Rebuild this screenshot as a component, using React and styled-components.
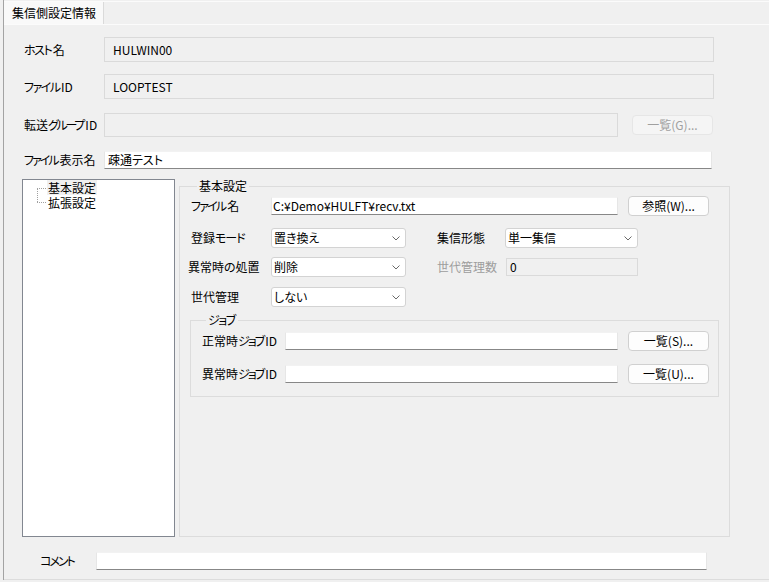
import React from 'react';
import styled, { createGlobalStyle } from 'styled-components';

const GlobalStyle = createGlobalStyle`
  html, body {
    margin: 0;
    padding: 0;
    background: #f0f0f0;
  }
  body {
    font-family: "Noto Sans CJK JP", "Noto Sans", sans-serif;
    font-size: 12px;
    font-feature-settings: "palt";
    color: #000;
  }
  * { box-sizing: border-box; }
`;

const Screen = styled.div`
  width: 769px;
  height: 582px;
  background: #f0f0f0;
  overflow: hidden;
`;

const Frame = styled.div`
  margin-left: 3px;
  height: 580px;
  border-left: 1px solid #a3a3a3;
  display: flex;
  flex-direction: column;
`;

const TabBar = styled.div`
  margin-top: 1px;
  height: 23px;
  border-top: 1px solid #fbfbfb;
  display: flex;
  align-items: flex-end;
`;

const Tab = styled.div`
  width: 100px;
  height: 22px;
  background: #f9f9f9;
  border-right: 1px solid #dadada;
  padding-left: 8px;
  display: flex;
  align-items: center;
  line-height: 1;
`;

const Panel = styled.div`
  flex: 1;
  border-top: 1px solid #fbfbfb;
  border-bottom: 1px solid #dcdcdc;
  padding: 12px 0 0 20px;
  display: flex;
  flex-direction: column;
`;

const Row = styled.div`
  display: flex;
  align-items: center;
  height: ${p => p.$h || 25}px;
  margin-top: ${p => p.$mt || 0}px;
  margin-left: ${p => p.$ml || 0}px;
  flex-shrink: 0;
`;

const Label = styled.div`
  width: ${p => p.$w || 80}px;
  margin-left: ${p => p.$ml || 0}px;
  color: ${p => (p.$disabled ? '#9d9d9d' : '#000')};
  white-space: nowrap;
  line-height: 1;
  flex-shrink: 0;
`;

const Kana = styled.span`
  letter-spacing: ${p => p.$ls || -1.5}px;
  margin-right: ${p => -(p.$ls || -1.5)}px;
`;

const ReadOnlyField = styled.div`
  width: ${p => p.$w}px;
  height: ${p => p.$h || 25}px;
  border: 1px solid #dadada;
  background: #f0f0f0;
  padding-left: ${p => p.$pl || 8}px;
  display: flex;
  align-items: center;
  line-height: 1;
  color: #000;
`;

const TextBox = styled.div`
  width: ${p => p.$w}px;
  height: 18px;
  background: #fff;
  border: 1px solid #e6e6e6;
  border-top-color: #f2f2f2;
  border-bottom-color: #878787;
  padding-left: ${p => p.$pl || 1}px;
  display: flex;
  align-items: center;
  line-height: 1;
  white-space: nowrap;
`;

const Button = styled.div`
  width: 81px;
  height: 20px;
  margin-left: ${p => p.$ml || 10}px;
  border: 1px solid ${p => (p.$disabled ? '#e6e6e6' : '#d0d0d0')};
  border-radius: 4px;
  background: ${p => (p.$disabled ? '#f5f5f5' : '#fdfdfd')};
  color: ${p => (p.$disabled ? '#a0a0a0' : '#000')};
  display: flex;
  align-items: center;
  justify-content: center;
  line-height: 1;
  flex-shrink: 0;
`;

const SelectBox = styled.div`
  width: ${p => p.$w}px;
  height: 20px;
  background: #fff;
  border: 1px solid #d3d3d3;
  border-radius: 3px;
  padding: 0 5px 0 2px;
  display: flex;
  align-items: center;
  justify-content: space-between;
  line-height: 1;
  flex-shrink: 0;
`;

const Lower = styled.div`
  display: flex;
  margin-top: 10px;
  margin-left: -2px;
  flex-shrink: 0;
`;

const Tree = styled.div`
  width: 153px;
  height: 358px;
  background: #fff;
  border: 1px solid #828790;
  padding: 0 0 0 14px;
  display: flex;
  align-items: flex-start;
`;

const TreeItems = styled.div`
  display: flex;
  flex-direction: column;
`;

const TreeItem = styled.div`
  height: 15px;
  padding: 0 1px;
  display: flex;
  align-items: center;
  line-height: 12px;
  background: ${p => (p.$selected ? '#f0f0f0' : 'transparent')};
`;

const GroupBox = styled.fieldset`
  margin: ${p => p.$mt || 0}px 0 0 ${p => p.$ml || 0}px;
  padding: ${p => p.$pad};
  width: ${p => p.$w}px;
  height: ${p => (p.$h ? `${p.$h}px` : 'auto')};
  border: 1px solid #dcdcdc;
  min-width: 0;
  flex-shrink: 0;
`;

const Legend = styled.legend`
  margin-left: ${p => p.$ml || 6}px;
  padding: 0 2px;
  line-height: 14px;
  height: 14px;
  font-size: 12px;
`;

const Chevron = () => (
  <svg width="8" height="5" viewBox="0 0 8 5">
    <polyline points="0.5,0.5 4,4 7.5,0.5" fill="none" stroke="#6a6a6a" strokeWidth="1" />
  </svg>
);

const Select = ({ w, value }) => (
  <SelectBox $w={w}>
    <span>{value}</span>
    <Chevron />
  </SelectBox>
);

const TreeLines = () => (
  <svg width="10" height="24" viewBox="0 0 10 24" style={{ flexShrink: 0 }}>
    <g stroke="#a0a0a0" strokeWidth="1" strokeDasharray="1 1" shapeRendering="crispEdges">
      <line x1="0" y1="8.5" x2="10" y2="8.5" />
      <line x1="0.5" y1="9" x2="0.5" y2="23" />
      <line x1="0" y1="22.5" x2="10" y2="22.5" />
    </g>
  </svg>
);

export default function App() {
  return (
    <Screen>
      <GlobalStyle />
      <Frame>
        <TabBar>
          <Tab>集信側設定情報</Tab>
        </TabBar>
        <Panel>
          <Row>
            <Label><Kana $ls={-1.5}>ホスト</Kana>名</Label>
            <ReadOnlyField $w={610}>HULWIN00</ReadOnlyField>
          </Row>
          <Row $mt={12}>
            <Label><Kana $ls={-1.5}>ファイル</Kana>ID</Label>
            <ReadOnlyField $w={610}>LOOPTEST</ReadOnlyField>
          </Row>
          <Row $mt={13}>
            <Label>転送<Kana $ls={-2.3}>グループ</Kana>ID</Label>
            <ReadOnlyField $w={514} $h={24} />
            <Button $disabled $ml={14}>一覧(G)...</Button>
          </Row>
          <Row $mt={14} $h={18}>
            <Label><Kana $ls={-2}>ファイル</Kana>表示名</Label>
            <TextBox $w={608} $pl={3}>疎通テスト</TextBox>
          </Row>

          <Lower>
            <Tree>
              <TreeLines />
              <TreeItems>
                <TreeItem $selected>基本設定</TreeItem>
                <TreeItem>拡張設定</TreeItem>
              </TreeItems>
            </Tree>

            <GroupBox $ml={4} $w={551} $h={358} $pad="3px 0 0 11px">
              <Legend>基本設定</Legend>
              <Row $h={20}>
                <Label><Kana $ls={-1.8}>ファイル</Kana>名</Label>
                <TextBox $w={347}>C:¥Demo¥HULFT¥recv.txt</TextBox>
                <Button>参照(W)...</Button>
              </Row>
              <Row $h={20} $mt={12}>
                <Label>登録<Kana $ls={-1}>モード</Kana></Label>
                <Select w={135} value="置き換え" />
                <Label $ml={31} $w={68}>集信形態</Label>
                <Select w={133} value="単一集信" />
              </Row>
              <Row $h={20} $mt={9}>
                <Label $ml={-3} $w={83}>異常時の処置</Label>
                <Select w={135} value="削除" />
                <Label $ml={31} $w={69} $disabled>世代管理数</Label>
                <ReadOnlyField $w={132} $h={18} $pl={3}>0</ReadOnlyField>
              </Row>
              <Row $h={20} $mt={10}>
                <Label>世代管理</Label>
                <Select w={135} value="しない" />
              </Row>

              <GroupBox $mt={6} $ml={-1} $w={529} $pad="4px 0 12px 11px">
                <Legend $ml={4}><Kana $ls={-1.5}>ジョブ</Kana></Legend>
                <Row $h={20}>
                  <Label $w={83}>正常時<Kana $ls={-2}>ジョブ</Kana>ID</Label>
                  <TextBox $w={333} />
                  <Button>一覧(S)...</Button>
                </Row>
                <Row $h={20} $mt={13}>
                  <Label $w={83}>異常時<Kana $ls={-2}>ジョブ</Kana>ID</Label>
                  <TextBox $w={333} />
                  <Button>一覧(U)...</Button>
                </Row>
              </GroupBox>
            </GroupBox>
          </Lower>

          <Row $h={18} $mt={15} $ml={16}>
            <Label $w={56}><Kana $ls={-2}>コメント</Kana></Label>
            <TextBox $w={611} />
          </Row>
        </Panel>
      </Frame>
    </Screen>
  );
}
